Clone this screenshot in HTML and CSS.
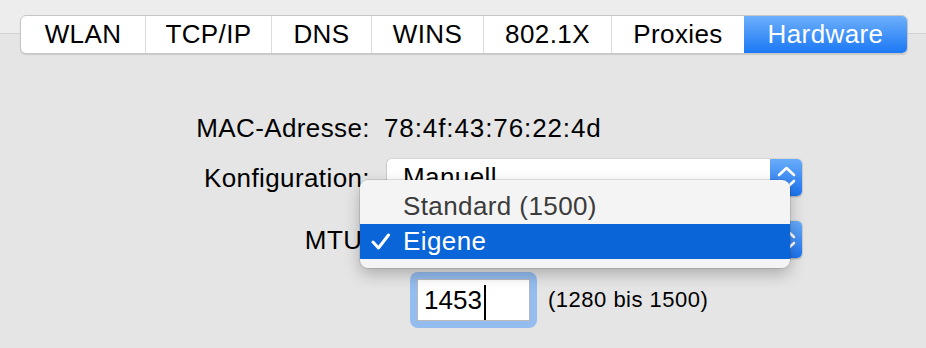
FILE: index.html
```html
<!DOCTYPE html>
<html lang="de">
<head>
    <meta charset="UTF-8">
    <meta name="viewport" content="width=device-width, initial-scale=1.0">
    <title>Netzwerk - Hardware</title>
    <link rel="stylesheet" href="styles.css">
</head>
<body>
    <nav class="segmented">
        <span class="seg">WLAN</span>
        <span class="seg">TCP/IP</span>
        <span class="seg">DNS</span>
        <span class="seg">WINS</span>
        <span class="seg">802.1X</span>
        <span class="seg">Proxies</span>
        <span class="seg active">Hardware</span>
    </nav>

    <div class="form">
        <div class="row">
            <div class="label">MAC-Adresse:</div>
            <div class="mac">78:4f:43:76:22:4d</div>
        </div>

        <div class="row row-config">
            <div class="label">Konfiguration:</div>
            <div class="popup">
                <span class="popup-text">Manuell</span>
                <span class="stepper">
                    <svg width="33" height="39" viewBox="0 0 33 39">
                        <path d="M9 17 L16.5 10 L24 17 M9 23 L16.5 30 L24 23" fill="none" stroke="#fff" stroke-width="2.6" stroke-linecap="round" stroke-linejoin="round"/>
                    </svg>
                </span>
            </div>
        </div>

        <div class="row row-mtu">
            <div class="label">MTU:</div>
            <!-- value is covered by the open menu -->
            <div class="popup">
                <span class="popup-text"></span>
                <span class="stepper">
                    <svg width="33" height="39" viewBox="0 0 33 39">
                        <path d="M9 17 L16.5 10 L24 17 M9 23 L16.5 30 L24 23" fill="none" stroke="#fff" stroke-width="2.6" stroke-linecap="round" stroke-linejoin="round"/>
                    </svg>
                </span>
            </div>
        </div>

        <div class="row row-field">
            <div class="label"></div>
            <div class="field-ring">
                <div class="field">1453<span class="caret"></span></div>
            </div>
            <span class="hint">(1280 bis 1500)</span>
        </div>

        <!-- open popup menu for MTU -->
        <div class="menu">
            <div class="menu-item">
                <span class="check"></span>
                <span>Standard (1500)</span>
            </div>
            <div class="menu-item selected">
                <span class="check">
                    <svg width="19" height="17" viewBox="0 0 19 17">
                        <path d="M2 9 L7.5 15 L17.5 2" fill="none" stroke="#fff" stroke-width="3" stroke-linecap="round" stroke-linejoin="round"/>
                    </svg>
                </span>
                <span>Eigene</span>
            </div>
        </div>
    </div>
</body>
</html>
```

FILE: styles.css
```css
body {
    font-family: 'Liberation Sans', Arial, sans-serif;
    font-size: 26px;
    letter-spacing: 0.4px;
    color: #000;
    margin: 0;
    padding-top: 15px;
    height: 333px;
    overflow: hidden;
    background: linear-gradient(#ededed 0, #ededed 33px, #d2d2d2 33px, #d2d2d2 34px, #e5e5e5 34px);
}
.segmented {
    display: grid;
    grid-template-columns: 124px 126px 100px 112px 128px 133px 1fr;
    margin-left: 20px;
    width: 888px;
    height: 39px;
    background: white;
    border: 1px solid #c6c6c6;
    border-radius: 6px;
    box-sizing: border-box;
    box-shadow: 0 1px 1px rgba(0, 0, 0, 0.12);
    overflow: hidden;
}
.seg {
    text-align: center;
    line-height: 37px;
    border-left: 1px solid #dcdcdc;
}
.seg:first-child {
    border-left: none;
}
.seg.active {
    color: white;
    border-left: none;
    background: linear-gradient(#6daffc, #1b78f4);
}
.form {
    position: relative;
    margin-top: 59px;
}
.row {
    display: flex;
    align-items: center;
}
.label {
    width: 370px;
    flex: none;
    text-align: right;
    line-height: 30px;
}
.mac {
    margin-left: 14px;
    line-height: 30px;
    letter-spacing: 0.9px;
}
.row-config {
    margin-top: 15px;
}
.row-mtu {
    margin-top: 23px;
}
.row-field {
    margin-top: 13px;
}
.popup {
    display: flex;
    margin-left: 16px;
    width: 417px;
    height: 39px;
    background: white;
    border: 1px solid #cbcbcb;
    border-top-color: #d6d6d6;
    border-bottom-color: #b5b5b5;
    border-radius: 6px;
    box-sizing: border-box;
    box-shadow: 0 1px 1px rgba(0, 0, 0, 0.08);
    overflow: hidden;
}
.popup-text {
    flex: auto;
    padding-left: 16px;
    line-height: 37px;
}
.stepper {
    width: 33px;
    margin: -1px -1px -1px 0;
    background: linear-gradient(#6aadfb, #1a72ef);
}
.stepper svg {
    display: block;
}
.field-ring {
    margin-left: 40px;
    padding: 7px;
    background: #94bcef;
    border-radius: 8px;
}
.field {
    width: 113px;
    height: 42px;
    box-sizing: border-box;
    background: white;
    border: 1px solid #b9b9b9;
    padding-left: 6px;
    line-height: 40px;
    letter-spacing: 0;
}
.caret {
    display: inline-block;
    width: 2px;
    height: 35px;
    margin-left: 2px;
    background: #000;
    vertical-align: middle;
}
.hint {
    margin-left: 11px;
    font-size: 22px;
    letter-spacing: 0.5px;
}
.menu {
    position: absolute;
    left: 360px;
    top: 67px;
    width: 430px;
    padding: 9px 0;
    background: #f4f4f4;
    border-radius: 8px;
    box-shadow: 0 0 0 1px rgba(0, 0, 0, 0.1), 0 6px 16px rgba(0, 0, 0, 0.25);
}
.menu-item {
    display: flex;
    align-items: center;
    height: 35px;
    color: #3b3b3b;
}
.menu-item.selected {
    background: #0a65d8;
    color: white;
}
.check {
    width: 32px;
    padding-left: 11px;
    flex: none;
}
.check svg {
    display: block;
}
```
